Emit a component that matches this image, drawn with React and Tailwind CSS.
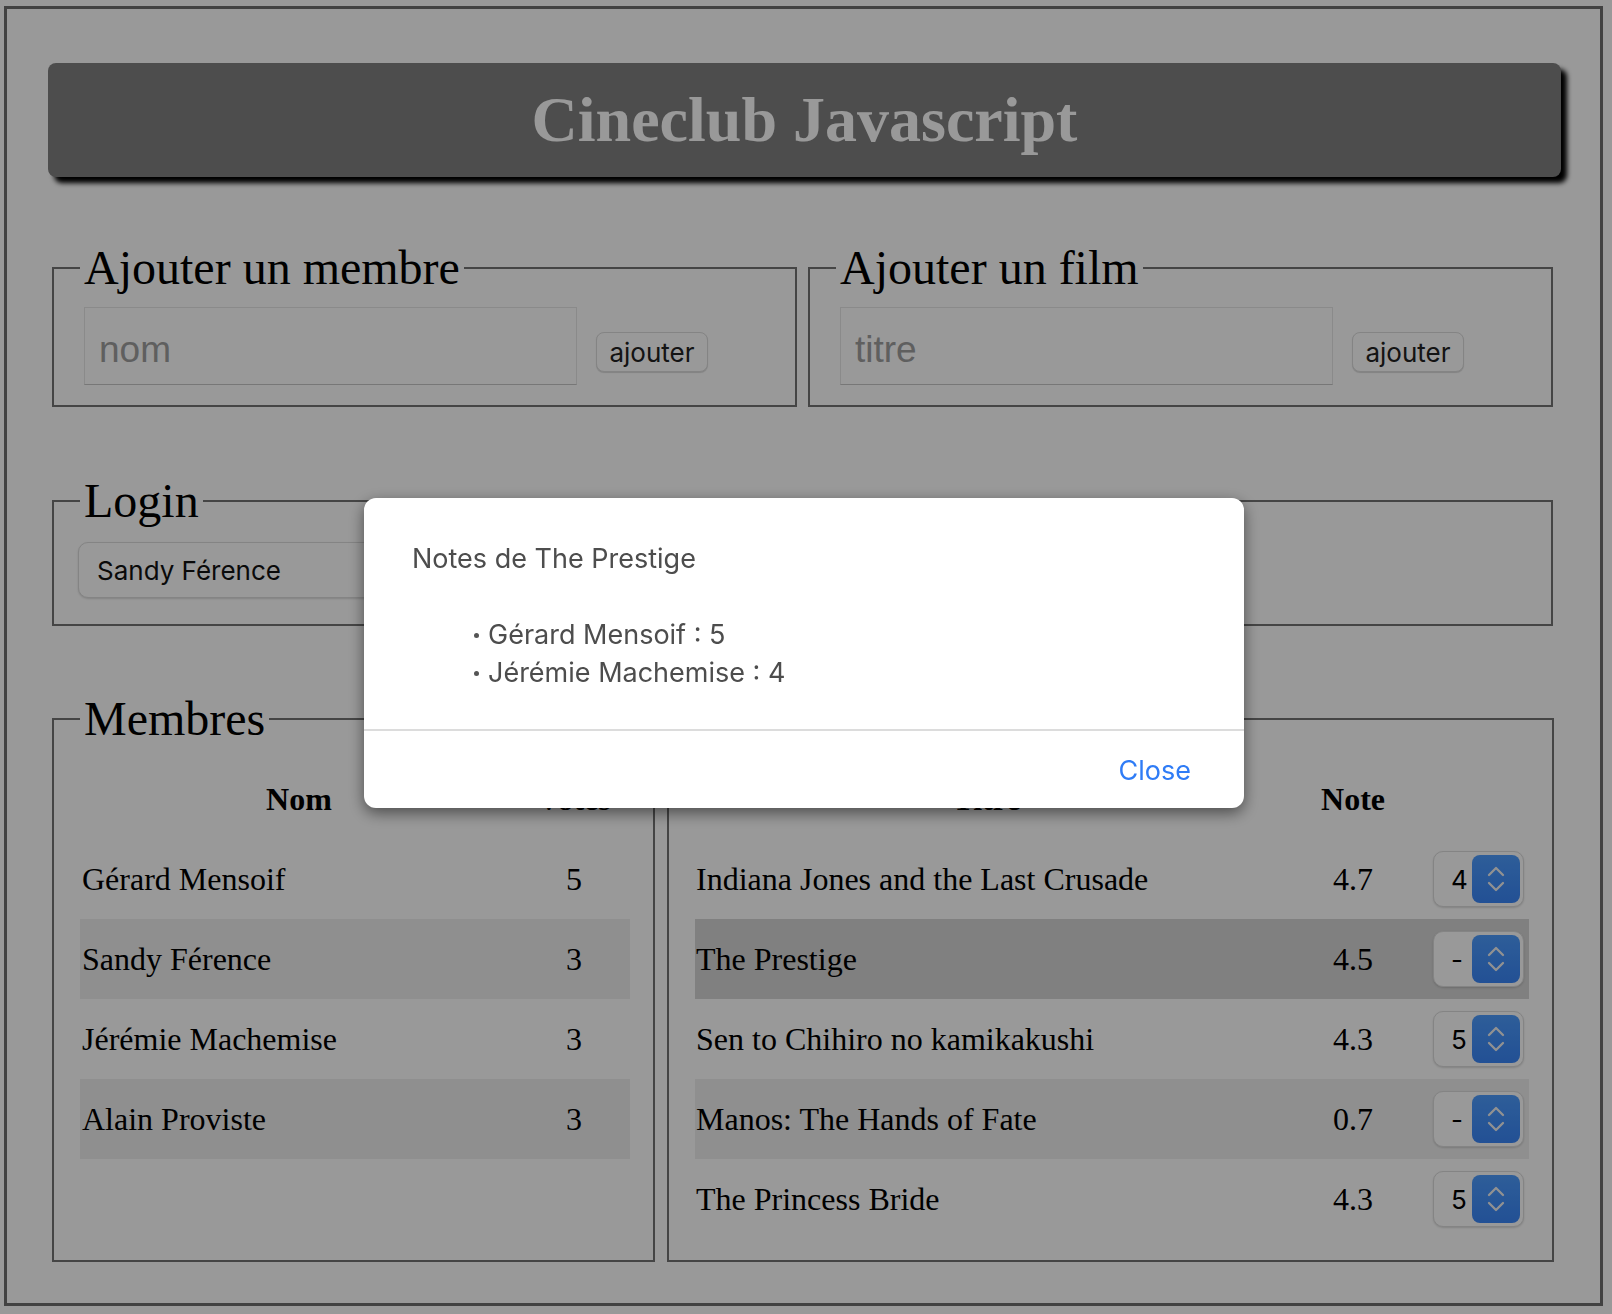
import React from 'react';

const members = [
  { name: 'Gérard Mensoif', votes: 5 },
  { name: 'Sandy Férence', votes: 3 },
  { name: 'Jérémie Machemise', votes: 3 },
  { name: 'Alain Proviste', votes: 3 },
];

const films = [
  { title: 'Indiana Jones and the Last Crusade', note: '4.7', mine: '4' },
  { title: 'The Prestige', note: '4.5', mine: '-', active: true },
  { title: 'Sen to Chihiro no kamikakushi', note: '4.3', mine: '5' },
  { title: 'Manos: The Hands of Fate', note: '0.7', mine: '-' },
  { title: 'The Princess Bride', note: '4.3', mine: '5' },
];

const Box = ({ title, className = '', children }) => (
  <fieldset className={`border-2 border-[#747474] pl-[26px] pr-[23px] ${className}`}>
    <legend className="px-[4px] text-[48px] leading-[56px]">{title}</legend>
    {children}
  </fieldset>
);

const Chevrons = () => (
  <svg width="20" height="32" viewBox="0 0 20 32" fill="none" stroke="#f2f2f2" strokeWidth="2.3" strokeLinecap="round" strokeLinejoin="round">
    <path d="M3 12 L10 5 L17 12" />
    <path d="M3 20 L10 27 L17 20" />
  </svg>
);

const NoteSelect = ({ value, className = '' }) => (
  <div className={`flex h-[56px] items-center justify-between rounded-[10px] border border-[#dcdcdc] bg-white pr-[3px] shadow-[0_1px_2px_rgba(0,0,0,0.15)] font-['Inter',sans-serif] text-[26px] text-black ${className}`}>
    <span>{value}</span>
    <span className="flex h-[48px] w-[48px] items-center justify-center rounded-[8px] bg-linear-to-b from-[#4d9cff] to-[#3a86f8]">
      <Chevrons />
    </span>
  </div>
);

const AddForm = ({ title, placeholder, className }) => (
  <Box title={title} className={`pb-[20px] ${className}`}>
    <div className="flex items-start">
      <input
        placeholder={placeholder}
        className="mt-[11px] ml-[4px] h-[78px] w-[493px] border border-[#e6e6e6] border-b-[#c6c6c6] bg-white px-[14px] pt-[8px] font-['Liberation_Sans',sans-serif] text-[37px] outline-none placeholder:text-[#9e9e9e]"
      />
      <button className="mt-[36px] ml-[19px] h-[40px] w-[112px] rounded-[8px] border border-[#dcdcdc] bg-white font-['Inter',sans-serif] text-[26px] text-[#222] shadow-[0_1px_1px_rgba(0,0,0,0.15)]">
        ajouter
      </button>
    </div>
  </Box>
);

export default function App() {
  return (
    <div className="bg-white pl-[4px] pt-[6px] font-['Liberation_Serif',serif] text-black">
      <div className="h-[1300px] w-[1599px] border-[3px] border-[#6e6e6e]">
        <header className="mt-[54px] ml-[41px] flex h-[114px] w-[1513px] items-center justify-center rounded-[8px] bg-[#808080] shadow-[6px_6px_5px_#000]">
          <h1 className="text-[64px] font-bold leading-[74px] text-white">Cineclub Javascript</h1>
        </header>

        <div className="mt-[63px] ml-[45px] flex w-[1501px] gap-[11px]">
          <AddForm title="Ajouter un membre" placeholder="nom" className="w-[745px]" />
          <AddForm title="Ajouter un film" placeholder="titre" className="w-[745px]" />
        </div>

        <Box title="Login" className="mt-[66px] ml-[45px] w-[1501px] pb-[26px]">
          <div className="mt-[13px] -ml-[2px] flex h-[56px] w-[430px] items-center justify-between rounded-[10px] border border-[#dcdcdc] bg-white pl-[18px] pr-[3px] shadow-[0_1px_2px_rgba(0,0,0,0.15)] font-['Inter',sans-serif] text-[26px] text-[#111]">
            <span>Sandy Férence</span>
            <span className="flex h-[48px] w-[48px] items-center justify-center rounded-[8px] bg-linear-to-b from-[#4d9cff] to-[#3a86f8]">
              <Chevrons />
            </span>
          </div>
        </Box>

        <div className="mt-[65px] ml-[45px] flex w-[1501px] gap-[12px]">
          <Box title="Membres" className="w-[603px] pb-[21px]">
            <div className="mt-[12px] w-[550px] text-[32px]">
              <div className="flex h-[80px] items-center font-bold">
                <div className="w-[438px] text-center">Nom</div>
                <div className="w-[112px] text-center">Votes</div>
              </div>
              {members.map((m, i) => (
                <div key={m.name} className={`flex h-[80px] items-center ${i % 2 === 1 ? 'bg-[#efefef]' : ''}`}>
                  <div className="w-[438px] pl-[2px]">{m.name}</div>
                  <div className="w-[112px] text-center">{m.votes}</div>
                </div>
              ))}
            </div>
          </Box>

          <Box title="Films" className="w-[886px] pb-[21px]">
            <div className="mt-[12px] w-[834px] text-[32px]">
              <div className="flex h-[80px] items-center font-bold">
                <div className="w-[583px] text-center">Titre</div>
                <div className="w-[150px] text-center">Note</div>
                <div className="w-[101px]"></div>
              </div>
              {films.map((f, i) => (
                <div
                  key={f.title}
                  className={`flex h-[80px] items-center ${f.active ? 'bg-[#d5d5d5]' : i % 2 === 1 ? 'bg-[#efefef]' : ''}`}
                >
                  <div className="w-[583px] pl-[1px]">{f.title}</div>
                  <div className="w-[150px] text-center">{f.note}</div>
                  <div className="flex w-[101px] justify-center">
                    <NoteSelect value={f.mine} className="w-[91px] pl-[17px]" />
                  </div>
                </div>
              ))}
            </div>
          </Box>
        </div>
      </div>

      <div className="fixed inset-0 z-50 flex items-center justify-center bg-black/40">
        <div className="mr-[4px] mb-[8px] w-[880px] rounded-[12px] bg-white font-['Inter',sans-serif] text-[27px] shadow-[0_5px_15px_rgba(0,0,0,0.5)]">
          <div className="px-[48px] pt-[45px] pb-[37px] text-[#4d4d4d]">
            <p className="leading-[32px]">Notes de The Prestige</p>
            <ul className="mt-[41px] pl-[62px]">
              <li className="flex items-center leading-[38px]">
                <span className="mr-[9px] h-[5px] w-[5px] rounded-full bg-[#555]"></span>
                Gérard Mensoif : 5
              </li>
              <li className="flex items-center leading-[38px]">
                <span className="mr-[9px] h-[5px] w-[5px] rounded-full bg-[#555]"></span>
                Jérémie Machemise : 4
              </li>
            </ul>
          </div>
          <div className="flex justify-end border-t-2 border-[#dcdcdc] px-[53px] pt-[24px] pb-[21px]">
            <button className="leading-[32px] text-[#2f7cf6]">Close</button>
          </div>
        </div>
      </div>
    </div>
  );
}
